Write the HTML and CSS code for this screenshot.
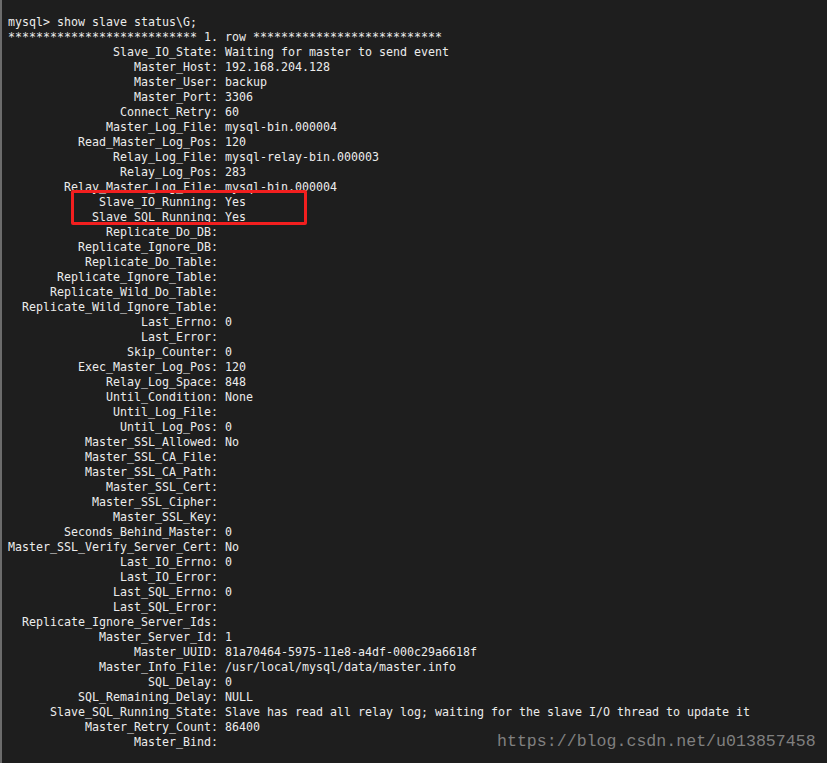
FILE: index.html
```html
<!DOCTYPE html>
<html>
<head>
<meta charset="utf-8">
<link rel="stylesheet" href="styles.css">
</head>
<body>
<div class="terminal">
<pre class="output">mysql&gt; show slave status\G;
*************************** 1. row ***************************
               Slave_IO_State: Waiting for master to send event
                  Master_Host: 192.168.204.128
                  Master_User: backup
                  Master_Port: 3306
                Connect_Retry: 60
              Master_Log_File: mysql-bin.000004
          Read_Master_Log_Pos: 120
               Relay_Log_File: mysql-relay-bin.000003
                Relay_Log_Pos: 283
        Relay_Master_Log_File: mysql-bin.000004
             Slave_IO_Running: Yes
            Slave_SQL_Running: Yes
              Replicate_Do_DB: 
          Replicate_Ignore_DB: 
           Replicate_Do_Table: 
       Replicate_Ignore_Table: 
      Replicate_Wild_Do_Table: 
  Replicate_Wild_Ignore_Table: 
                   Last_Errno: 0
                   Last_Error: 
                 Skip_Counter: 0
          Exec_Master_Log_Pos: 120
              Relay_Log_Space: 848
              Until_Condition: None
               Until_Log_File: 
                Until_Log_Pos: 0
           Master_SSL_Allowed: No
           Master_SSL_CA_File: 
           Master_SSL_CA_Path: 
              Master_SSL_Cert: 
            Master_SSL_Cipher: 
               Master_SSL_Key: 
        Seconds_Behind_Master: 0
Master_SSL_Verify_Server_Cert: No
                Last_IO_Errno: 0
                Last_IO_Error: 
               Last_SQL_Errno: 0
               Last_SQL_Error: 
  Replicate_Ignore_Server_Ids: 
             Master_Server_Id: 1
                  Master_UUID: 81a70464-5975-11e8-a4df-000c29a6618f
             Master_Info_File: /usr/local/mysql/data/master.info
                    SQL_Delay: 0
          SQL_Remaining_Delay: NULL
      Slave_SQL_Running_State: Slave has read all relay log; waiting for the slave I/O thread to update it
           Master_Retry_Count: 86400
                  Master_Bind: </pre>
<div class="highlight"></div>
<div class="watermark">https://blog.csdn.net/u013857458</div>
</div>
</body>
</html>
```
FILE: styles.css
```css
html, body {
  margin: 0;
  padding: 0;
  background: #1e1e1e;
}
.terminal {
  position: relative;
  width: 825px;
  height: 763px;
  background: #1e1e1e;
  border-left: 2px solid #6c6c6c;
  overflow: hidden;
}
.output {
  margin: 0;
  padding: 15px 0 0 6px;
  font-family: "DejaVu Sans Mono", "Liberation Mono", monospace;
  font-size: 11.63px;
  line-height: 15px;
  color: #ececec;
}
.highlight {
  position: absolute;
  left: 69px;
  top: 190px;
  width: 230px;
  height: 29px;
  border: 3px solid #f21f1f;
  border-radius: 2px;
}
.watermark {
  position: absolute;
  left: 495px;
  top: 732px;
  font-family: "Liberation Mono", monospace;
  font-size: 16.6px;
  line-height: 20px;
  color: #808080;
}
```
